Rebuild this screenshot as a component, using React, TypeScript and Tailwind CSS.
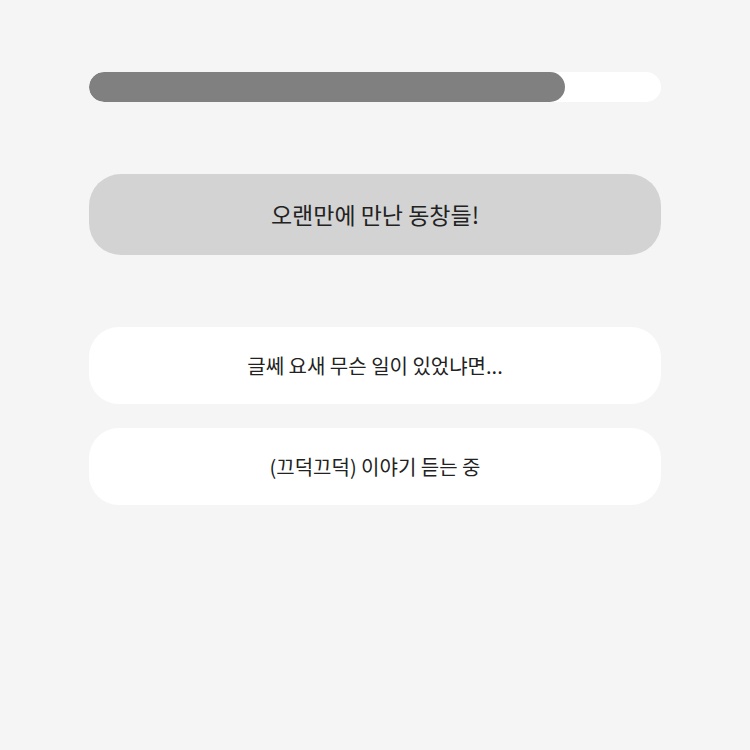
export default function App() {
  return (
    <div className="min-h-screen w-full bg-[#f5f5f5] pt-[72px]" style={{ fontFamily: '"Noto Sans CJK KR", "Noto Sans", sans-serif' }}>
      <div className="mx-auto w-[572px] flex flex-col">
        <div className="h-[30px] w-full rounded-full bg-white overflow-hidden">
          <div className="h-full w-[476px] rounded-full bg-[#808080]" />
        </div>
        <div className="mt-[72px] h-[81px] rounded-[32px] bg-[#d3d3d3] flex items-center justify-center text-[23px] font-normal text-[#222]">
          오랜만에 만난 동창들!
        </div>
        <div className="mt-[72px] flex flex-col gap-[24px]">
          <button className="h-[77px] w-full rounded-[30px] bg-white flex items-center justify-center text-[20px] font-normal text-[#222]">
            글쎄 요새 무슨 일이 있었냐면...
          </button>
          <button className="h-[77px] w-full rounded-[30px] bg-white flex items-center justify-center text-[20px] font-normal text-[#222]">
            (끄덕끄덕) 이야기 듣는 중
          </button>
        </div>
      </div>
    </div>
  );
}
